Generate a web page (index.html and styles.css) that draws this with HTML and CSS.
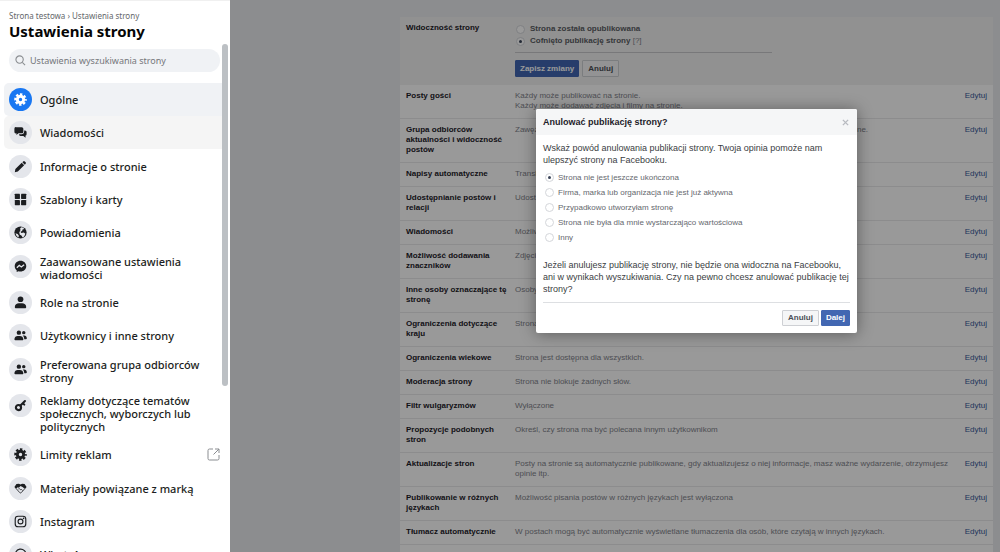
FILE: index.html
```html
<!DOCTYPE html>
<html lang="pl">
<head>
<meta charset="utf-8">
<title>Ustawienia strony</title>
<link rel="stylesheet" href="styles.css">
</head>
<body>
<div class="app">
  <aside class="sidebar">
    <header class="side-head">
      <p class="crumbs">Strona testowa › Ustawienia strony</p>
      <h1>Ustawienia strony</h1>
    </header>
    <label class="search">
      <svg viewBox="0 0 12 12" aria-hidden="true"><circle cx="5" cy="5" r="4"/><path d="M8 8l3 3"/></svg>
      <input type="text" placeholder="Ustawienia wyszukiwania strony" aria-label="Ustawienia wyszukiwania strony">
    </label>
    <nav>
      <ul class="menu">
        <li class="active"><a href="#"><span class="ico"><svg viewBox="0 0 16 16"><circle class="teeth" cx="8" cy="8" r="6.200"/><circle class="ring" cx="8" cy="8" r="3.900"/></svg></span>Ogólne</a></li>
        <li class="hover"><a href="#"><span class="ico"><svg viewBox="0 0 16 16"><path d="M3 1.500h6.500a2 2 0 0 1 2 2v3.500a2 2 0 0 1-2 2H5.500L3 11V9a2 2 0 0 1-2.500-2V3.500a2 2 0 0 1 2.500-2z"/><path d="M12.500 5.500h1a2 2 0 0 1 2 2V10a2 2 0 0 1-1.300 1.800V14.500l-2.700-2.300H8a2 2 0 0 1-1.900-2H9.500a3 3 0 0 0 3-3z"/></svg></span>Wiadomości</a></li>
        <li><a href="#"><span class="ico"><svg viewBox="0 0 16 16"><path d="M1 15l.7-3.800 7.800-7.700 3 3-7.800 7.800zM10.300 2.700l1-1a1.500 1.500 0 0 1 2 0l1 1a1.500 1.500 0 0 1 0 2l-1 1z"/></svg></span>Informacje o stronie</a></li>
        <li><a href="#"><span class="ico"><svg viewBox="0 0 16 16"><rect x="1" y="1" width="6.300" height="6.300" rx=".6"/><rect x="8.700" y="1" width="6.300" height="6.300" rx=".6"/><rect x="1" y="8.700" width="6.300" height="6.300" rx=".6"/><rect x="8.700" y="8.700" width="6.300" height="6.300" rx=".6"/></svg></span>Szablony i karty</a></li>
        <li><a href="#"><span class="ico"><svg viewBox="0 0 16 16"><circle cx="8" cy="8" r="7.500"/><path class="cut" d="M9 1.500l2.500.8 1 1.500-2 .4L10 6 8 7l1 1.500 3-.5 2 1.500-1.500 3.500-2 1L9.500 12 7 10.500 6.500 8 8 5l-.5-2zM1.800 9l2.700.8L6 12l-.5 2A6.500 6.500 0 0 1 1.800 9z"/></svg></span>Powiadomienia</a></li>
        <li><a href="#"><span class="ico"><svg viewBox="0 0 16 16"><path d="M8 1C4 1 .9 3.900.9 7.600c0 2 .9 3.700 2.400 4.900v2.300l2.300-1.100c.8.300 1.500.4 2.400.4 4 0 7.100-2.900 7.100-6.500S12 1 8 1z"/><path class="line-cut" d="M3.500 9.500l3-3L9 8.600l3.500-2.800"/></svg></span>Zaawansowane ustawienia wiadomości</a></li>
        <li><a href="#"><span class="ico"><svg viewBox="0 0 16 16"><circle cx="8" cy="4" r="3.500"/><path d="M1 13.500C1 10.500 3.500 9 6 9h4c2.500 0 5 1.500 5 4.500 0 1-.5 1.500-1.500 1.500h-11C1.500 15 1 14.500 1 13.500z"/></svg></span>Role na stronie</a></li>
        <li><a href="#"><span class="ico"><svg viewBox="0 0 16 16"><circle cx="6" cy="4.500" r="2.700"/><circle cx="12" cy="4.500" r="2.100"/><path d="M.5 12.500c0-2.500 2-4 4-4h2.800c2.200 0 4.200 1.500 4.200 4 0 .8-.4 1.300-1.200 1.300H1.700c-.8 0-1.200-.5-1.200-1.300zM10.800 8h1.700c2 0 3.300 1.500 3.300 3.500 0 .8-.4 1.200-1.100 1.200h-2.100c0-2-.6-3.600-1.800-4.700z"/></svg></span>Użytkownicy i inne strony</a></li>
        <li><a href="#"><span class="ico"><svg viewBox="0 0 16 16"><circle cx="6" cy="4.500" r="2.700"/><circle cx="12" cy="4.500" r="2.100"/><path d="M.5 12.500c0-2.500 2-4 4-4h2.800c2.200 0 4.200 1.500 4.200 4 0 .8-.4 1.300-1.200 1.300H1.700c-.8 0-1.200-.5-1.200-1.300zM10.800 8h1.700c2 0 3.300 1.500 3.300 3.500 0 .8-.4 1.200-1.100 1.200h-2.100c0-2-.6-3.600-1.800-4.700z"/></svg></span>Preferowana grupa odbiorców strony</a></li>
        <li><a href="#"><span class="ico"><svg viewBox="0 0 16 16"><path class="key" d="M8 8l5.500-5.500M11 5.500l1.600 1.300"/><circle class="key" cx="5.500" cy="10.500" r="3.200"/></svg></span>Reklamy dotyczące tematów społecznych, wyborczych lub politycznych</a></li>
        <li><a href="#"><span class="ico"><svg viewBox="0 0 16 16"><circle class="teeth" cx="8" cy="8" r="6.200"/><circle class="ring" cx="8" cy="8" r="3.900"/></svg></span><span class="grow">Limity reklam</span><svg class="external" viewBox="0 0 13 13" aria-hidden="true"><path d="M6 1H2.500A1.500 1.500 0 0 0 1 2.500v8A1.500 1.500 0 0 0 2.500 12h8a1.500 1.500 0 0 0 1.500-1.500V7M8 1h4v4M12 1L6.500 6.500"/></svg></a></li>
        <li><a href="#"><span class="ico"><svg viewBox="0 0 16 16"><path d="M.5 6L3 2.500l3-.5 2 1 2-1 3 .5L15.500 6 13.500 8.500l-3-2.500L8 5 6 7 4.500 6.500 2.500 8.500z"/><path class="thin" d="M3 8.500l4 4.500q1 1 2 0l4-4.500M5.500 8.500q1.500-1 2.500 1 1.500-1 2.500 1"/></svg></span>Materiały powiązane z marką</a></li>
        <li><a href="#"><span class="ico"><svg viewBox="0 0 16 16"><g class="outline"><rect x="1.500" y="1.500" width="13" height="13" rx="3.500"/><circle cx="8" cy="8" r="3"/></g><circle cx="11.800" cy="4.200" r="1"/></svg></span>Instagram</a></li>
        <li><a href="#"><span class="ico"><svg viewBox="0 0 16 16"><path class="outline" d="M1.500 14.500l1-3.500a6.500 6.500 0 1 1 2.500 2.500zM5.500 5c0 3 2.500 5.500 5.500 5.500"/></svg></span>WhatsApp</a></li>
      </ul>
    </nav>
    <div class="thumb"></div>
  </aside>

  <main class="main">
    <section class="panel">
      <form class="visibility">
        <h2>Widoczność strony</h2>
        <div class="vis-body">
          <label class="radio"><input type="radio" name="vis">Strona została opublikowana</label>
          <label class="radio"><input type="radio" name="vis" checked><span>Cofnięto publikację strony <span class="help">[?]</span></span></label>
          <div class="vis-actions">
            <button type="button" class="btn primary">Zapisz zmiany</button>
            <button type="button" class="btn">Anuluj</button>
          </div>
        </div>
      </form>
      <div class="row"><h3>Posty gości</h3><p>Każdy może publikować na stronie.<br>Każdy może dodawać zdjęcia i filmy na stronie.</p><a href="#">Edytuj</a></div>
      <div class="row"><h3>Grupa odbiorców aktualności i widoczność postów</h3><p>Zawężanie potencjalnej grupy odbiorców aktualności i ograniczanie widoczności postów wyłączone.</p><a href="#">Edytuj</a></div>
      <div class="row"><h3>Napisy automatyczne</h3><p>Transkrypcje są wyłączone</p><a href="#">Edytuj</a></div>
      <div class="row"><h3>Udostępnianie postów i relacji</h3><p>Udostępnianie w relacjach jest włączone</p><a href="#">Edytuj</a></div>
      <div class="row"><h3>Wiadomości</h3><p>Możliwość wysyłania wiadomości</p><a href="#">Edytuj</a></div>
      <div class="row"><h3>Możliwość dodawania znaczników</h3><p>Zdjęcia mogą oznaczać inni</p><a href="#">Edytuj</a></div>
      <div class="row"><h3>Inne osoby oznaczające tę stronę</h3><p>Osoby i inne strony</p><a href="#">Edytuj</a></div>
      <div class="row"><h3>Ograniczenia dotyczące kraju</h3><p>Strona jest widoczna</p><a href="#">Edytuj</a></div>
      <div class="row"><h3>Ograniczenia wiekowe</h3><p>Strona jest dostępna dla wszystkich.</p><a href="#">Edytuj</a></div>
      <div class="row"><h3>Moderacja strony</h3><p>Strona nie blokuje żadnych słów.</p><a href="#">Edytuj</a></div>
      <div class="row"><h3>Filtr wulgaryzmów</h3><p>Wyłączone</p><a href="#">Edytuj</a></div>
      <div class="row"><h3>Propozycje podobnych stron</h3><p>Określ, czy strona ma być polecana innym użytkownikom</p><a href="#">Edytuj</a></div>
      <div class="row"><h3>Aktualizacje stron</h3><p>Posty na stronie są automatycznie publikowane, gdy aktualizujesz o niej informacje, masz ważne wydarzenie, otrzymujesz opinie itp.</p><a href="#">Edytuj</a></div>
      <div class="row"><h3>Publikowanie w różnych językach</h3><p>Możliwość pisania postów w różnych językach jest wyłączona</p><a href="#">Edytuj</a></div>
      <div class="row"><h3>Tłumacz automatycznie</h3><p>W postach mogą być automatycznie wyświetlane tłumaczenia dla osób, które czytają w innych językach.</p><a href="#">Edytuj</a></div>
      <div class="row"><h3>Ranking komentarzy</h3><p>Większość komentarzy</p><a href="#">Edytuj</a></div>
    </section>

    <div class="overlay">
      <form class="dialog" role="dialog" aria-labelledby="dialog-title">
        <header class="dialog-head">
          <h2 id="dialog-title">Anulować publikację strony?</h2>
          <button type="button" class="close" aria-label="Zamknij"><svg viewBox="0 0 8 8"><path d="M1 1l6 6M7 1L1 7"/></svg></button>
        </header>
        <div class="dialog-body">
          <p>Wskaż powód anulowania publikacji strony. Twoja opinia pomoże nam ulepszyć strony na Facebooku.</p>
          <div class="reasons">
            <label class="radio"><input type="radio" name="reason" checked>Strona nie jest jeszcze ukończona</label>
            <label class="radio"><input type="radio" name="reason">Firma, marka lub organizacja nie jest już aktywna</label>
            <label class="radio"><input type="radio" name="reason">Przypadkowo utworzyłam stronę</label>
            <label class="radio"><input type="radio" name="reason">Strona nie była dla mnie wystarczająco wartościowa</label>
            <label class="radio"><input type="radio" name="reason">Inny</label>
          </div>
          <p>Jeżeli anulujesz publikację strony, nie będzie ona widoczna na Facebooku, ani w wynikach wyszukiwania. Czy na pewno chcesz anulować publikację tej strony?</p>
          <footer class="dialog-foot">
            <button type="button" class="btn">Anuluj</button>
            <button type="button" class="btn primary">Dalej</button>
          </footer>
        </div>
      </form>
    </div>
  </main>
</div>
</body>
</html>
```
FILE: styles.css
```css
* { box-sizing: border-box; }
body { margin: 0; font-family: "Liberation Sans", Arial, sans-serif; font-size: 8px; line-height: 10px; color: #1d2129; }
h1, h2, h3, p, ul { margin: 0; padding: 0; }
a { text-decoration: none; }
button, input { font-family: inherit; margin: 0; }

.app { display: grid; grid-template-columns: 230px 1fr; height: 100vh; overflow: hidden; }

/* Sidebar */
.sidebar { position: relative; overflow: hidden; background: #fff; border-top: 1px solid #f0f0f0; font-family: "Noto Sans", "Open Sans", sans-serif; }
.side-head { padding: 9px 9px 0; }
.crumbs { font-size: 8px; line-height: 12px; color: #65676b; }
h1 { font-size: 15px; line-height: 18px; font-weight: 700; color: #050505; }
.search { display: flex; align-items: center; gap: 4px; height: 23px; margin: 9px 10px 11px 9px; padding: 0 6px; border-radius: 12px; background: #f0f2f5; }
.search svg { width: 11px; height: 11px; fill: none; stroke: #8a8d91; stroke-width: 1.2; }
.search input { flex: 1; min-width: 0; padding: 0; border: 0; outline: 0; background: none; font-size: 9px; color: #65676b; }
.search input::placeholder { color: #75777b; opacity: 1; }
.menu { list-style: none; padding: 0 8px 0 4px; }
.menu li { border-radius: 5px 0 0 5px; }
.menu li:nth-child(3n+2) { margin-bottom: 1px; }
.menu .active { background: #f0f2f5; }
.menu .hover { background: #f5f5f5; }
.menu a { display: flex; align-items: center; gap: 8px; padding: 5px 16px 5px 5px; font-size: 11px; line-height: 13px; font-weight: 500; color: #1c1e21; }
.ico { display: flex; flex: none; align-self: flex-start; align-items: center; justify-content: center; width: 23px; height: 23px; border-radius: 50%; background: #e4e6eb; }
.ico svg { width: 13px; height: 13px; fill: #1c1e21; stroke: none; color: #1c1e21; }
.active .ico { background: #1877f2; }
.active .ico svg { fill: #fff; color: #fff; }
.ico .cut { fill: #e4e6eb; }
.ico .line-cut { fill: none; stroke: #e4e6eb; stroke-width: 1.6; }
.ico .key { fill: none; stroke: #1c1e21; stroke-width: 2.6; stroke-linecap: round; }
.ico .teeth { fill: none; stroke: currentColor; stroke-width: 3; stroke-dasharray: 2.9 1.97; stroke-dashoffset: 1.45; }
.ico .ring { fill: none; stroke: currentColor; stroke-width: 3.6; }
.ico .outline { fill: none; stroke: #1c1e21; stroke-width: 1.4; }
.ico .thin { fill: none; stroke: #1c1e21; stroke-width: 1; }
.grow { flex: 1; }
.menu a:has(.external) { padding-right: 2px; }
.external { width: 13px; height: 13px; fill: none; stroke: #8a8d91; }
.thumb { position: absolute; top: 43px; right: 2px; width: 6px; height: 62%; border-radius: 3px; background: #bcc0c4; }

/* Settings list */
.main { position: relative; overflow: hidden; padding: 17px 7px 0 170px; background: #e9ebee; }
.panel { background: #fff; }
.visibility, .row { display: grid; grid-template-columns: 109px 1fr auto; padding: 6px 6px 7px; }
.visibility { grid-template-columns: 109px 1fr; padding-bottom: 8px; background: #f2f2f2; }
.panel h2, .row h3 { font-size: 8px; line-height: 10px; font-weight: 700; color: #1d2129; }
.row h3 { padding-right: 2px; }
.row { border-bottom: 1px solid #e9eaec; }
.row p { padding-right: 10px; color: #7f838b; }
.row a { color: #365899; }
.radio { display: flex; align-items: center; gap: 5px; }
.radio input { appearance: none; flex: none; display: grid; place-items: center; width: 9px; height: 9px; border: 1px solid #d4d6da; border-radius: 50%; background: #fff; }
.radio input:checked::before { content: ""; width: 3px; height: 3px; border-radius: 50%; background: #3b4559; }
.vis-body .radio { padding-left: 1px; height: 12px; font-weight: 700; color: #5a5d63; }
.help { font-weight: 400; color: #7f838b; }
.vis-actions { display: flex; gap: 3px; margin: 5px 215px 0 0; padding-top: 7px; border-top: 1px solid #c8c9cc; }
.btn { height: 17px; padding: 0 5px; border: 1px solid #ced0d4; border-radius: 1px; background: #f5f6f7; font-size: 8px; line-height: 10px; font-weight: 700; color: #4b4f56; white-space: nowrap; }
.btn.primary { padding: 0 4px; border-color: #4267b2; background: #4267b2; color: #fff; }

/* Dialog */
.overlay { position: absolute; inset: 0; display: flex; justify-content: center; align-items: flex-start; padding: 109px 7px 0 170px; background: rgba(0, 0, 0, .4); }
.dialog { width: 321px; border-radius: 2px; background: #fff; box-shadow: 0 1px 16px rgba(0, 0, 0, .4); }
.dialog-head { display: flex; justify-content: space-between; align-items: center; height: 26px; padding: 0 7px; border-radius: 2px 2px 0 0; background: #f5f6f7; }
.dialog-head h2 { font-size: 9px; line-height: 12px; }
.close { display: flex; padding: 1px; border: 0; background: none; }
.close svg { width: 7px; height: 7px; fill: none; stroke: #b8bbc1; stroke-width: 1.6; }
.dialog-body { padding: 7px; font-size: 9px; line-height: 12px; color: #3a3d42; }
.reasons { padding: 4px 0 14px 2px; }
.reasons .radio { height: 15px; gap: 4px; font-size: 8px; color: #65686e; }
.dialog-foot { display: flex; justify-content: flex-end; gap: 2px; margin-top: 7px; padding-top: 7px; border-top: 1px solid #dddfe2; }
.dialog-foot .btn { height: 16px; }
```
